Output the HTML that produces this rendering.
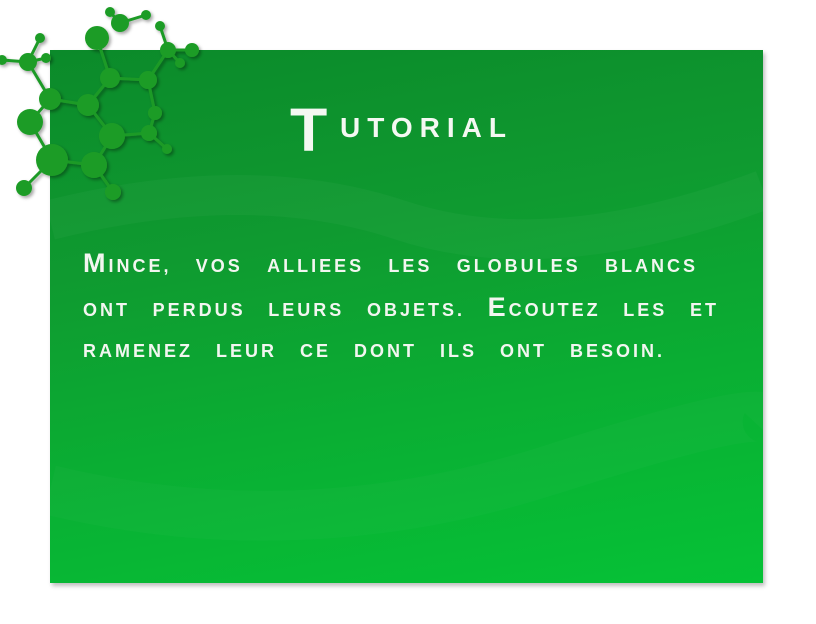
<!DOCTYPE html>
<html><head><meta charset="utf-8"><style>
body{margin:0;width:816px;height:624px;background:#fff;position:relative;overflow:hidden;font-family:"Liberation Sans",sans-serif}
#panel{position:absolute;left:50px;top:50px;width:713px;height:533px;background:linear-gradient(170deg,#0b8a2a 0%,#0f9a30 35%,#0aae33 65%,#05c236 100%);box-shadow:2px 3px 4px rgba(0,0,0,.25);overflow:hidden}
.t{position:absolute;color:#f4f8f2;font-weight:bold;text-transform:uppercase;white-space:nowrap}
.line{position:absolute;left:83px;display:flex;color:#f2f6f0;font-weight:bold;font-size:18px;letter-spacing:3px;line-height:20px;text-transform:uppercase;white-space:nowrap;align-items:baseline}
.big{font-size:27px}
</style></head><body>
<div id="panel">
<svg width="713" height="533" style="position:absolute;left:0;top:0">
<path d="M0 170 Q200 120 350 170 T713 140" stroke="rgba(255,255,255,.03)" stroke-width="40" fill="none"/>
<path d="M0 440 Q250 500 500 420 T713 380" stroke="rgba(255,255,255,.025)" stroke-width="50" fill="none"/>
</svg>
</div>
<svg width="210" height="210" style="position:absolute;left:0;top:0">
<defs><filter id="s"><feDropShadow dx="2" dy="2" stdDeviation="1.5" flood-opacity=".35"/></filter></defs>
<g filter="url(#s)">
<g stroke="#1e9a28" stroke-width="3">
<line x1="40" y1="38" x2="28" y2="62"/><line x1="2" y1="60" x2="28" y2="62"/><line x1="46" y1="58" x2="28" y2="62"/>
<line x1="28" y1="62" x2="50" y2="99"/><line x1="50" y1="99" x2="30" y2="122"/><line x1="30" y1="122" x2="52" y2="160"/>
<line x1="52" y1="160" x2="24" y2="188"/><line x1="52" y1="160" x2="94" y2="165"/><line x1="50" y1="99" x2="88" y2="105"/>
<line x1="88" y1="105" x2="110" y2="78"/><line x1="110" y1="78" x2="97" y2="38"/><line x1="110" y1="78" x2="148" y2="80"/>
<line x1="148" y1="80" x2="168" y2="50"/><line x1="168" y1="50" x2="160" y2="26"/><line x1="168" y1="50" x2="192" y2="50"/>
<line x1="168" y1="50" x2="180" y2="63"/><line x1="148" y1="80" x2="155" y2="113"/><line x1="155" y1="113" x2="149" y2="133"/>
<line x1="149" y1="133" x2="112" y2="136"/><line x1="88" y1="105" x2="112" y2="136"/><line x1="112" y1="136" x2="94" y2="165"/>
<line x1="94" y1="165" x2="113" y2="192"/><line x1="149" y1="133" x2="167" y2="149"/>
<line x1="120" y1="23" x2="110" y2="12"/><line x1="120" y1="23" x2="146" y2="15"/>
</g>
<g fill="#1f9c25">
<circle cx="40" cy="38" r="5"/><circle cx="28" cy="62" r="9"/><circle cx="2" cy="60" r="5"/><circle cx="46" cy="58" r="5"/>
<circle cx="50" cy="99" r="11"/><circle cx="30" cy="122" r="13"/><circle cx="52" cy="160" r="16"/><circle cx="24" cy="188" r="8"/>
<circle cx="88" cy="105" r="11"/><circle cx="110" cy="78" r="10"/><circle cx="97" cy="38" r="12"/><circle cx="120" cy="23" r="9"/>
<circle cx="110" cy="12" r="5"/><circle cx="146" cy="15" r="5"/><circle cx="148" cy="80" r="9"/><circle cx="168" cy="50" r="8"/>
<circle cx="192" cy="50" r="7"/><circle cx="180" cy="63" r="5"/><circle cx="160" cy="26" r="5"/><circle cx="155" cy="113" r="7"/>
<circle cx="149" cy="133" r="8"/><circle cx="112" cy="136" r="13"/><circle cx="94" cy="165" r="13"/><circle cx="113" cy="192" r="8"/>
<circle cx="167" cy="149" r="5"/>
</g></g></svg>
<div class="t" style="left:290px;top:100px;font-size:61px;line-height:60px">T</div>
<div class="t" style="left:340px;top:114px;font-size:28px;line-height:28px;letter-spacing:7px">utorial</div>
<div class="line" style="top:253px;width:615px;justify-content:space-between"><span><span class="big">M</span>ince,</span><span>vos</span><span>alliees</span><span>les</span><span>globules</span><span>blancs</span></div>
<div class="line" style="top:297px;width:636px;justify-content:space-between"><span>ont</span><span>perdus</span><span>leurs</span><span>objets.</span><span><span class="big">E</span>coutez</span><span>les</span><span>et</span></div>
<div class="line" style="top:341px;gap:23px"><span>ramenez</span><span>leur</span><span>ce</span><span>dont</span><span>ils</span><span>ont</span><span>besoin.</span></div>
</body></html>
